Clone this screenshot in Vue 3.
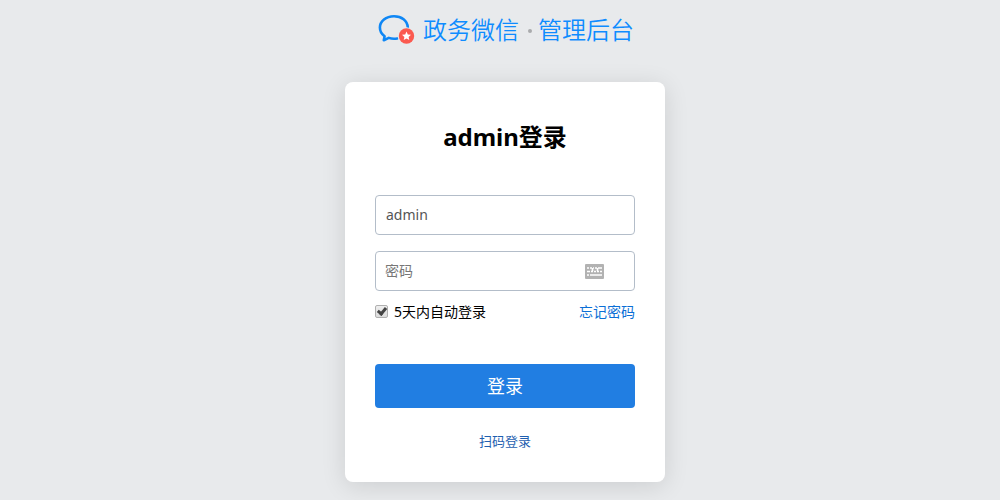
<script setup>
import { ref } from 'vue'

const account = ref('admin')
const password = ref('')
const remember = ref(true)
</script>

<template>
  <div class="page">
    <header class="brand">
      <svg class="logo" viewBox="0 0 38 32" aria-hidden="true">
        <path
          d="M30.800 13.500C30.500 6.500 24.500 2.200 17 2.200C9 2.200 2.900 7.200 2.900 13.600C2.900 17.300 4.600 20.200 7.600 22.300L6.800 26.200L11.800 23.900C14.500 24.900 17.500 25 20.300 24.500"
          fill="none"
          stroke="#0f87f5"
          stroke-width="2.600"
          stroke-linecap="round"
          stroke-linejoin="round"
        />
        <circle cx="29.500" cy="22" r="8.700" fill="#e8eaec" />
        <circle cx="29.500" cy="22" r="7.700" fill="#fb5a50" />
        <path
          d="M29.500 17.500L30.800 20.500L34 20.800L31.600 22.900L32.300 26.100L29.500 24.400L26.700 26.100L27.400 22.900L25 20.800L28.200 20.500Z"
          fill="#fff"
        />
      </svg>
      <span>政务微信</span>
      <i class="dot"></i>
      <span>管理后台</span>
    </header>

    <main class="card">
      <h1>admin登录</h1>
      <form @submit.prevent>
        <input v-model="account" class="field" type="text" aria-label="账号" />
        <div class="password">
          <input v-model="password" class="field" type="password" placeholder="密码" aria-label="密码" />
          <button class="keyboard" type="button" aria-label="软键盘">
            <svg viewBox="0 0 19 15" aria-hidden="true">
              <rect width="19" height="15" rx="1" fill="#b2b2b2" />
              <path
                d="M2 4H4M5 4H7M8 4H9M10 4H12M13 4H17M2 7.500H5M6 7.500H8M9 7.500H11M12 7.500H14M15 7.500H17M2 11H4M5 11H17M7.500 4V7M12.500 4V7"
                fill="none"
                stroke="#fff"
                stroke-width="1.600"
              />
            </svg>
          </button>
        </div>
        <div class="options">
          <label><input v-model="remember" type="checkbox" />5天内自动登录</label>
          <a href="#forgot">忘记密码</a>
        </div>
        <button class="submit" type="submit">登录</button>
      </form>
      <a class="scan" href="#scan">扫码登录</a>
    </main>
  </div>
</template>

<style>
body {
  background: #e8eaec;
}
</style>

<style scoped>
.page {
  display: flex;
  flex-direction: column;
  align-items: center;
  box-sizing: border-box;
  min-height: 100vh;
  padding: 12px 0 18px 10px;
  color: #000;
  font-family: "Noto Sans", "Noto Sans CJK SC", sans-serif;
  font-size: 14px;
  line-height: 20px;
}

.brand {
  display: flex;
  align-items: center;
  height: 36px;
  margin-bottom: 34px;
  padding-left: 1px;
  color: #0f8cff;
  font-family: "Noto Sans CJK SC", sans-serif;
  font-size: 24px;
  font-weight: 350;
  line-height: 34px;
}

.brand span {
  padding-bottom: 2px;
}

.logo {
  width: 38px;
  height: 32px;
  margin-right: 8px;
}

.dot {
  width: 4px;
  height: 4px;
  margin: 2px 6px 0 9px;
  border-radius: 50%;
  background: #a9abad;
}

.card {
  display: flex;
  flex-direction: column;
  box-sizing: border-box;
  width: 100%;
  max-width: 320px;
  padding: 37px 30px 31px;
  border-radius: 8px;
  background: #fff;
  box-shadow: 0 4px 24px rgba(0, 0, 0, 0.12);
}

h1 {
  margin: 0 0 40px;
  font-size: 24px;
  font-weight: 700;
  line-height: 36px;
  text-align: center;
}

form {
  display: flex;
  flex-direction: column;
}

.field {
  display: block;
  box-sizing: border-box;
  width: 100%;
  height: 40px;
  padding: 0 10px 2px;
  border: 1px solid #b3bdc9;
  border-radius: 4px;
  outline: 0;
  background: #fff;
  color: #555;
  font: inherit;
}

.field::placeholder {
  color: #777;
  opacity: 1;
}

.password {
  position: relative;
  margin-top: 16px;
}

.password .field {
  padding: 0 52px 2px 9px;
}

.keyboard {
  position: absolute;
  top: 13px;
  right: 31px;
  width: 19px;
  height: 15px;
  padding: 0;
  border: 0;
  background: none;
}

.keyboard svg {
  display: block;
  width: 19px;
  height: 15px;
}

.options {
  display: flex;
  justify-content: space-between;
  margin-top: 11px;
}

.options label {
  display: flex;
  align-items: center;
}

.options input {
  appearance: none;
  width: 13px;
  height: 13px;
  margin: 0 6px 2px 0;
  border: 1px solid #b0b0b0;
  border-radius: 2px;
  background: linear-gradient(#efefef, #dcdcdc);
}

.options input:checked::before {
  content: "";
  display: block;
  width: 3px;
  height: 6px;
  margin: 0 0 0 3px;
  border: solid #444;
  border-width: 0 3px 3px 0;
  transform: rotate(40deg);
}

a {
  color: #0b6fd6;
  text-decoration: none;
}

.submit {
  height: 44px;
  margin-top: 42px;
  padding: 0 0 2px;
  border: 0;
  border-radius: 4px;
  background: #217ee2;
  color: #fff;
  font-family: inherit;
  font-size: 18px;
}

.scan {
  align-self: center;
  margin-top: 23px;
  color: #1f5fb0;
  font-size: 13px;
}
</style>
